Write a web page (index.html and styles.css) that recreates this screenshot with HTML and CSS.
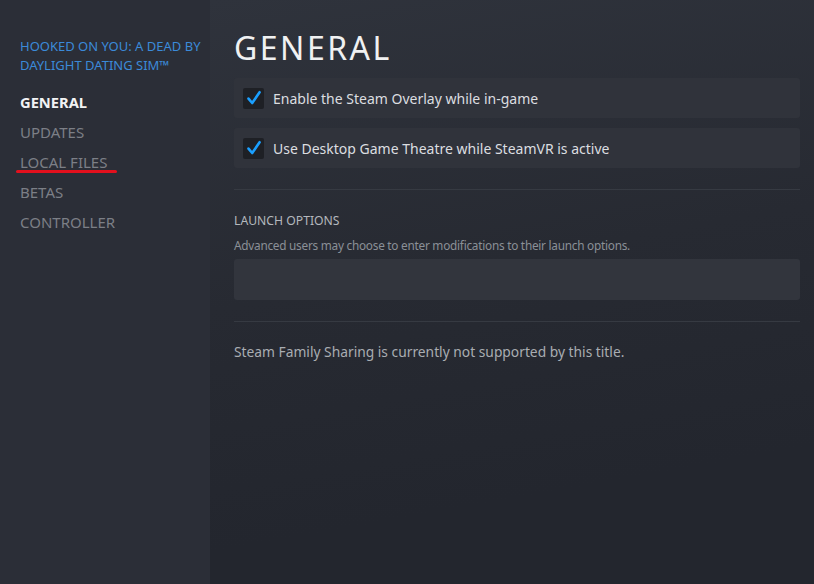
FILE: index.html
```html
<!DOCTYPE html>
<html lang="en">
<head>
  <meta charset="UTF-8">
  <title>Properties - General</title>
  <link rel="stylesheet" href="styles.css">
</head>
<body>
  <div class="window">
    <aside class="sidebar">
      <div class="game-title">HOOKED ON YOU: A DEAD BY DAYLIGHT DATING SIM™</div>
      <nav class="nav">
        <div class="nav-item active">GENERAL</div>
        <div class="nav-item">UPDATES</div>
        <div class="nav-item marked">LOCAL FILES</div>
        <div class="nav-item">BETAS</div>
        <div class="nav-item">CONTROLLER</div>
      </nav>
    </aside>

    <main class="content">
      <h1>GENERAL</h1>

      <div class="check-row">
        <span class="checkbox">
          <svg width="16" height="16" viewBox="0 0 16 16"><path d="M2.5 8.6 L6.2 13 L13.6 2.2" fill="none" stroke="#1a9fff" stroke-width="2.6" stroke-linecap="round" stroke-linejoin="round"/></svg>
        </span>
        <span class="check-label">Enable the Steam Overlay while in-game</span>
      </div>

      <div class="check-row">
        <span class="checkbox">
          <svg width="16" height="16" viewBox="0 0 16 16"><path d="M2.5 8.6 L6.2 13 L13.6 2.2" fill="none" stroke="#1a9fff" stroke-width="2.6" stroke-linecap="round" stroke-linejoin="round"/></svg>
        </span>
        <span class="check-label">Use Desktop Game Theatre while SteamVR is active</span>
      </div>

      <hr class="sep">

      <div class="section-title">LAUNCH OPTIONS</div>
      <div class="section-desc">Advanced users may choose to enter modifications to their launch options.</div>
      <div class="launch-input"></div>

      <hr class="sep">

      <p class="note">Steam Family Sharing is currently not supported by this title.</p>
    </main>
  </div>
</body>
</html>
```

FILE: styles.css
```css
html, body {
  margin: 0;
  height: 100%;
}
body {
  font-family: "Noto Sans", Arial, sans-serif;
  background-color: #23262e;
}
.window {
  display: flex;
  height: 584px;
}
.sidebar {
  width: 210px;
  flex-shrink: 0;
  background-color: #2b2e37;
  padding: 37px 0 0 20px;
  box-sizing: border-box;
}
.game-title {
  color: #3b8ad9;
  font-size: 13px;
  line-height: 19px;
  padding-right: 6px;
  margin-bottom: 12px;
}
.nav-item {
  color: #7c7f86;
  font-size: 15px;
  line-height: 30px;
  position: relative;
}
.nav-item.active {
  color: #f2f3f4;
  font-weight: 700;
  font-size: 14.7px;
}
.nav-item.marked::after {
  content: "";
  position: absolute;
  left: -4px;
  top: 23px;
  width: 101px;
  height: 3px;
  border-radius: 2px;
  background-color: #e3101d;
}
.content {
  flex: 1;
  padding: 28px 14px 0 24px;
  background: linear-gradient(170deg, #2f333c 0%, #272a32 45%, #23262e 80%);
}
h1 {
  margin: 0 0 10px;
  font-size: 32px;
  font-weight: 400;
  letter-spacing: 2.5px;
  color: #f0f1f2;
  line-height: 40px;
}
.check-row {
  display: flex;
  align-items: center;
  height: 40px;
  background-color: #30333b;
  border-radius: 3px;
  padding-left: 9px;
  margin-bottom: 10px;
}
.checkbox {
  width: 21px;
  height: 21px;
  background-color: #1e2025;
  border-radius: 2px;
  display: flex;
  align-items: center;
  justify-content: center;
  margin-right: 9px;
}
.check-label {
  color: #dcdee0;
  font-size: 14px;
}
.sep {
  border: none;
  border-top: 1px solid #363a42;
  margin: 21px 0 0;
}
.section-title {
  margin-top: 21px;
  color: #b4b8bd;
  font-size: 12.2px;
  line-height: 20px;
}
.section-desc {
  margin-top: 5px;
  color: #8b9097;
  font-size: 11.8px;
  letter-spacing: -0.25px;
  line-height: 18px;
}
.launch-input {
  margin-top: 5px;
  height: 41px;
  background-color: #32353d;
  border-radius: 3px;
}
.note {
  margin: 20px 0 0;
  color: #a9adb2;
  font-size: 13.8px;
  line-height: 20px;
}
```
